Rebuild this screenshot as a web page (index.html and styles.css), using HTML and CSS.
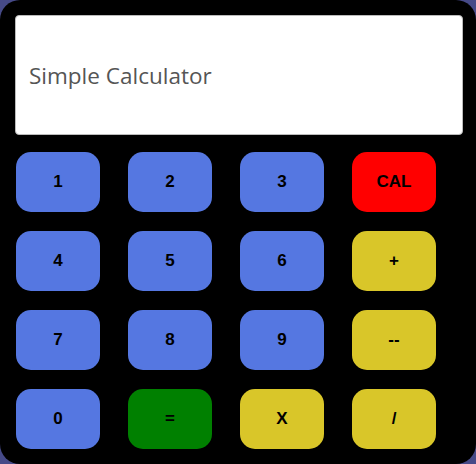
FILE: index.html
```html
<!DOCTYPE html>
<html>
<head>
<meta charset="utf-8">
<link rel="stylesheet" href="styles.css">
</head>
<body>
<div class="calc">
  <input class="display" type="text" placeholder="Simple Calculator">
  <div class="keys">
    <button class="key num">1</button>
    <button class="key num">2</button>
    <button class="key num">3</button>
    <button class="key clear">CAL</button>
    <button class="key num">4</button>
    <button class="key num">5</button>
    <button class="key num">6</button>
    <button class="key op">+</button>
    <button class="key num">7</button>
    <button class="key num">8</button>
    <button class="key num">9</button>
    <button class="key op">--</button>
    <button class="key num">0</button>
    <button class="key eq">=</button>
    <button class="key op">X</button>
    <button class="key op">/</button>
  </div>
</div>
</body>
</html>
```
FILE: styles.css
```css
html, body {
  margin: 0;
  padding: 0;
  background: #464a88;
}
.calc {
  width: 476px;
  height: 464px;
  box-sizing: border-box;
  background: #000;
  border-radius: 20px;
  padding: 15px 13px 0 15px;
}
.display {
  display: block;
  width: 448px;
  height: 120px;
  box-sizing: border-box;
  margin: 0;
  border: 1px solid #bbb;
  border-radius: 4px;
  background: #fff;
  padding: 0 13px;
  font-family: "Open Sans", sans-serif;
  font-size: 22.5px;
  color: #333;
  outline: none;
}
.display::placeholder {
  color: #555;
}
.keys {
  display: grid;
  grid-template-columns: repeat(4, 84px);
  grid-auto-rows: 60px;
  column-gap: 28px;
  row-gap: 19px;
  margin-top: 17px;
  padding-left: 1px;
}
.key {
  border: none;
  border-radius: 15px;
  font-family: "Liberation Sans", Arial, sans-serif;
  font-weight: bold;
  font-size: 17px;
  color: #000;
  padding: 0;
}
.num { background: #5577e1; }
.clear { background: #ff0000; }
.op { background: #d9c629; }
.eq { background: #008000; }
```
